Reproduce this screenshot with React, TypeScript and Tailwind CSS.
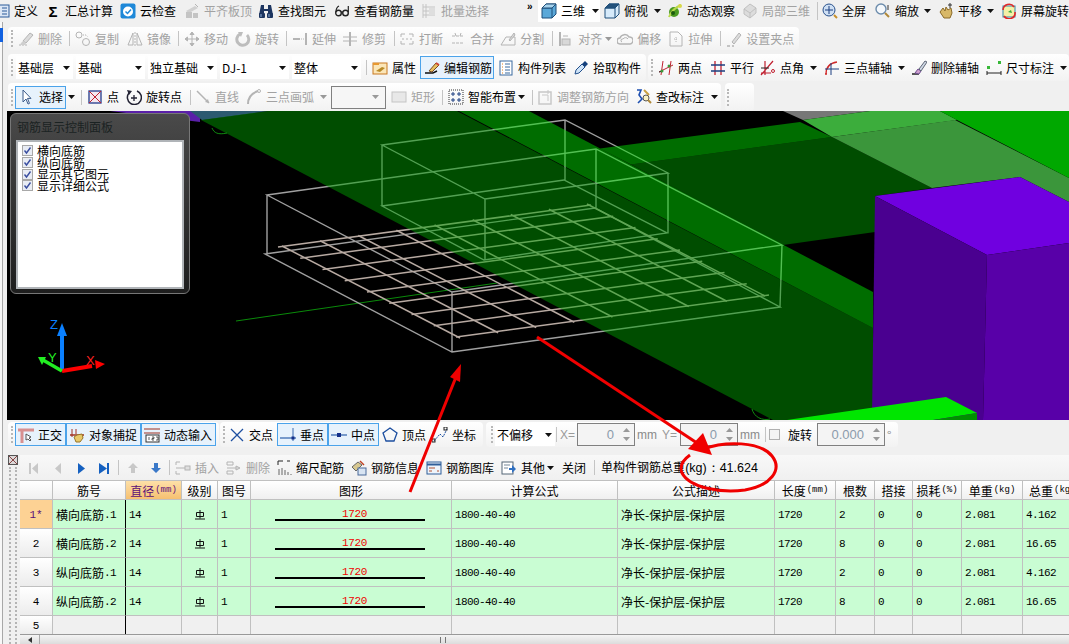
import { ReactNode } from "react";
import clsx from "clsx";

function Svg({ children }: { children: ReactNode }) {
  return (
    <svg viewBox="0 0 16 16" fill="none" className="w-4 h-4 shrink-0">
      {children}
    </svg>
  );
}

const GRAY = "#b4b4b4";

// top row
const DocIcon = () => <Svg><rect x="1" y="2" width="14" height="12" fill="#dbe6f5" stroke="#2a5a9a" /><path d="M8 5h5M8 8h5M8 11h5" stroke="#2a5a9a" /></Svg>;
const CloudIcon = () => <Svg><rect x="0.5" y="0.5" width="15" height="15" rx="2" fill="#1e88d8" /><circle cx="8" cy="8.5" r="5" fill="#fff" /><path d="M5.5 8.5l2 2 3.5-4" stroke="#1e88d8" strokeWidth="1.5" /></Svg>;
const PlateIcon = () => <Svg><path d="M2 8l9-5 3 2-9 5z" fill="#d0d0d0" /><path d="M2 9h6v6H2zM9 10h5v5H9z" fill="#c4c4c4" /><path d="M11 1l3 3" stroke={GRAY} /></Svg>;
const BinocIcon = () => <Svg><path d="M3 2h3v4h4V2h3l2 10h-5V8H6v4H1z" fill="#1d3560" /><rect x="1" y="10" width="6" height="5" rx="1" fill="#1d3560" /><rect x="9" y="10" width="6" height="5" rx="1" fill="#1d3560" /><path d="M3 11v3M11 11v3" stroke="#8fb0d8" /></Svg>;
const GlassesIcon = () => <Svg><circle cx="4.5" cy="10" r="2.8" stroke="#222" strokeWidth="1.4" /><circle cx="11.5" cy="10" r="2.8" stroke="#222" strokeWidth="1.4" /><path d="M7 9h2M2 9c0-3 1-5 3-6M14.3 9V3" stroke="#222" strokeWidth="1.2" /></Svg>;
const BatchIcon = () => <Svg><path d="M2 1v14M5 1v14M2 4h12M2 8h12M2 12h12" stroke="#c4c4c4" /><path d="M8 5h6v7H8z" fill="#dedede" /></Svg>;
const CubeIcon = ({ light }: { light?: boolean }) => <Svg><path d="M1 5l4-4h10v10l-4 4H1z" fill={light ? "#d6eafa" : "#5ba8d8"} stroke="#1f4f7a" /><path d="M1 5h10v10M11 5l4-4" stroke="#1f4f7a" /><path d="M1 5l4-4h10l-4 4z" fill={light ? "#24527c" : "#a8d4ee"} stroke="#1f4f7a" /></Svg>;
const OrbitIcon = () => <Svg><ellipse cx="7" cy="9" rx="5" ry="5" fill="#4a9a22" /><path d="M2 14C4 9 9 4 14 2" stroke="#b8d84a" strokeWidth="2" /><circle cx="13" cy="3" r="2" fill="#d8d84a" /><circle cx="6" cy="10" r="2" fill="#1d5a10" /></Svg>;
const LocalIcon = () => <Svg><path d="M2 6l6-5 6 4v5l-6 5-6-4z" fill="#dcdcdc" stroke="#c0c0c0" /><path d="M2 6l6 4 6-5M8 10v5" stroke="#c0c0c0" /></Svg>;
const FullIcon = () => <Svg><circle cx="7" cy="7" r="6" fill="#cfe0f4" stroke="#28508c" /><path d="M7 3v8M3 7h8" stroke="#1d3f80" /><path d="M12 12l3 3" stroke="#c8902a" strokeWidth="2" /></Svg>;
const ZoomIcon = () => <Svg><circle cx="6" cy="6" r="5" fill="#f4f8fc" stroke="#6c8cac" strokeWidth="1.4" /><path d="M10 10l4 4" stroke="#b08838" strokeWidth="2" /><path d="M13 2v5" stroke="#333" /></Svg>;
const HandIcon = () => <Svg><path d="M2 9l3-4 2 3 1-4 2 3 3-2 1 5-2 5H6z" fill="#d8b868" stroke="#8a6a28" /><path d="M12 0v5M10 2h4" stroke="#333" /></Svg>;
const ScreenIcon = () => <Svg><rect x="2" y="3" width="12" height="11" fill="#f4f0a8" stroke="#38a" /><path d="M2 7a6 6 0 0 1 11-3M14 9a6 6 0 0 1-11 4" stroke="#e02828" strokeWidth="1.6" /><path d="M7 9l3-2 1 3z" fill="#38a838" /></Svg>;

// edit row, all greyed out
const EraserIcon = () => <Svg><path d="M5 10l7-8 3 2-7 8z" fill="#dcdcdc" stroke={GRAY} /><path d="M1 14h9" stroke={GRAY} strokeDasharray="2 1" /><path d="M3 12l2-2 3 2-1 2H2z" fill="#cfcfcf" /></Svg>;
const CopyIcon = () => <Svg><circle cx="4" cy="4" r="3" stroke={GRAY} /><circle cx="11" cy="11" r="3.5" stroke={GRAY} /><path d="M8 4h3l2 2" stroke={GRAY} strokeDasharray="1 1" /></Svg>;
const MirrorIcon = () => <Svg><path d="M6 2L1 14h5zM10 2l5 12h-5z" stroke={GRAY} /><path d="M8 1v14" stroke={GRAY} strokeDasharray="2 1" /></Svg>;
const MoveIcon = () => <Svg><path d="M8 1v14M1 8h14M8 1L6 3.5h4zM8 15l-2-2.5h4zM1 8l2.5-2v4zM15 8l-2.5-2v4z" stroke={GRAY} fill={GRAY} /></Svg>;
const RotateIcon = () => <Svg><path d="M12 4a6 6 0 1 1-7-1" stroke="#bdbdbd" strokeWidth="3" /><path d="M3 1l5 0-2 5z" fill="#bdbdbd" /></Svg>;
const ExtendIcon = () => <Svg><path d="M1 8h7" stroke={GRAY} strokeWidth="2" /><path d="M9 8h3" stroke={GRAY} strokeDasharray="1 1" /><path d="M14 2v12" stroke={GRAY} strokeWidth="2" /></Svg>;
const TrimIcon = () => <Svg><path d="M1 6h6M1 10h6M9 6h6M9 10h6" stroke={GRAY} /><path d="M8 1v14" stroke={GRAY} strokeWidth="2" /></Svg>;
const BreakIcon = () => <Svg><path d="M2 3h4M10 3h4M2 13h4M10 13h4M2 3v3M14 3v3M2 13v-3M14 13v-3" stroke={GRAY} /><path d="M3 8h10" stroke={GRAY} strokeDasharray="2 2" /></Svg>;
const MergeIcon = () => <Svg><path d="M2 5h12M2 12h12" stroke={GRAY} strokeDasharray="3 1" /><path d="M5 2l1 3M11 2l-1 3" stroke={GRAY} /></Svg>;
const SplitIcon = () => <Svg><path d="M1 14l5-8h9v8z" stroke={GRAY} /><path d="M9 9l5-7 1 2-5 6z" fill="#d8d8d8" stroke={GRAY} /></Svg>;
const AlignIcon = () => <Svg><path d="M2 1v14" stroke={GRAY} strokeWidth="2" /><rect x="4" y="8" width="8" height="6" fill="#d8d8d8" stroke={GRAY} /><path d="M5 5h5" stroke={GRAY} /></Svg>;
const OffsetIcon = () => <Svg><path d="M3 13a3 3 0 0 1 0-6 5 5 0 0 1 9-1 3.5 3.5 0 0 1 1 7z" stroke={GRAY} strokeWidth="1.5" /><path d="M5 11a1 1 0 0 1 1-3 3 3 0 0 1 5 0" stroke={GRAY} /></Svg>;
const StretchIcon = () => <Svg><path d="M2 1h8l4 4v10H2z" stroke={GRAY} /><path d="M6 8h4M8 6v6" stroke={GRAY} strokeDasharray="1 1" /></Svg>;
const GripEditIcon = () => <Svg><path d="M1 15h3M6 15h2" stroke={GRAY} strokeWidth="1.5" /><path d="M6 11l7-9 2 2-7 9z" fill="#dcdcdc" stroke={GRAY} /></Svg>;

// selection row
const AttrIcon = () => <Svg><rect x="1" y="3" width="14" height="11" fill="#fbe6b8" stroke="#c87820" /><path d="M1 3h6v2H1z" fill="#e89830" /><path d="M4 11l6-4 3 1-5 4z" fill="#b88a28" /></Svg>;
const PenIcon = () => <Svg><path d="M1 13h8l4-2" stroke="#111" strokeWidth="1.4" /><path d="M5 11l7-8 3 2-7 7z" fill="#e8c060" stroke="#7a4a20" /><path d="M12 3l3 2" stroke="#d04a3a" strokeWidth="2" /></Svg>;
const ListIcon = () => <Svg><rect x="2" y="1" width="12" height="14" fill="#fff" stroke="#3a6aa0" /><path d="M4 4h1M4 7h1M4 10h1M4 13h1" stroke="#e08020" /><path d="M7 4h5M7 7h5M7 10h5M7 13h5" stroke="#3a6aa0" /></Svg>;
const DropperIcon = () => <Svg><path d="M2 14l1-4 6-6 3 3-6 6z" fill="#cfe4f8" stroke="#23508c" /><path d="M9 4l3-3 3 3-3 3z" fill="#14407c" /></Svg>;
const TwoPointIcon = () => <Svg><path d="M1 12L15 5M5 1L3 15M13 1l-2 14" stroke="#c02030" /><path d="M1 12l4-1" stroke="#222" /><circle cx="4" cy="11" r="1.5" fill="#3a9a3a" /><circle cx="11" cy="6" r="1.5" fill="#3a9a3a" /></Svg>;
const ParallelIcon = () => <Svg><path d="M5 1v14M11 1v14" stroke="#c02030" strokeWidth="1.3" /><path d="M1 5h14M1 11h14" stroke="#1d3f80" strokeWidth="1.3" /></Svg>;
const AngleIcon = () => <Svg><path d="M1 13h10M5 1v14M1 15L13 1" stroke="#c02030" strokeWidth="1.2" /><path d="M1 8h8" stroke="#222" /><circle cx="13" cy="11" r="1.5" stroke="#c02030" /></Svg>;
const ArcIcon = () => <Svg><path d="M2 14C2 7 6 3 13 2" stroke="#d02828" strokeWidth="1.3" /><path d="M7 3v12M1 9h14" stroke="#1d3f80" /><circle cx="2" cy="14" r="1" fill="#d02828" /></Svg>;
const BrushIcon = () => <Svg><path d="M1 14h7" stroke="#222" strokeWidth="1.5" /><path d="M4 13l3-4 3 2-2 3z" fill="#d0a0d0" stroke="#705090" /><path d="M8 9l6-8 2 1-6 9z" fill="#cfd8e4" stroke="#606878" /></Svg>;
const DimIcon = () => <Svg><path d="M1 13h14M1 11v4M15 11v4" stroke="#222" /><rect x="1" y="6" width="3" height="3" fill="#38b838" /><rect x="12" y="1" width="3" height="3" fill="#38b838" /></Svg>;

const CursorIcon = () => <Svg><path d="M4 1v12l3-3 2 5 1.5-.6-2-5H12z" fill="#fff" stroke="#3a5a8a" /></Svg>;
const PointIcon = () => <Svg><rect x="2" y="2" width="12" height="12" fill="#f4e8f0" stroke="#223a8a" strokeWidth="1.3" /><path d="M2 2l12 12M14 2L2 14" stroke="#c02030" /></Svg>;
const RotPointIcon = () => <Svg><path d="M11 2a7 7 0 1 1-8 2" stroke="#223" strokeWidth="1.5" /><path d="M1 1l5 1-3 4z" fill="#223" /><path d="M8 6v6M5 9h6" stroke="#223" strokeWidth="1.3" /></Svg>;
const LineIcon = () => <Svg><path d="M2 2l12 12" stroke={GRAY} strokeWidth="1.5" /><path d="M14 14l-4-1 3-3z" fill={GRAY} /></Svg>;
const GrayArcIcon = () => <Svg><path d="M2 15C2 8 6 4 12 2" stroke={GRAY} strokeWidth="2" /><circle cx="13" cy="2" r="1.5" stroke={GRAY} /></Svg>;
const RectIcon = () => <Svg><rect x="1" y="3" width="14" height="10" fill="#e8e8e8" stroke="#c4c4c4" /></Svg>;
const SmartIcon = () => <Svg><rect x="1" y="1" width="14" height="14" stroke="#333" strokeDasharray="1 1" /><path d="M5 3v4M3 5h4M11 3v4M9 5h4M5 9v4M3 11h4M11 9v4M9 11h4" stroke="#1d3f80" /></Svg>;
const AdjustIcon = () => <Svg><rect x="2" y="3" width="12" height="12" stroke="#c8c8c8" strokeWidth="1.5" /><path d="M5 6h6v6M11 1v4" stroke="#c8c8c8" /></Svg>;
const MarkIcon = () => <Svg><path d="M1 1h4L3 6l3 4-4 4" stroke="#1d4fb0" strokeWidth="1.6" /><circle cx="10" cy="9" r="3" fill="#f8f0c0" stroke="#555" /><path d="M12 11l3 3" stroke="#b08838" strokeWidth="2" /><path d="M8 1l5 5" stroke="#c8a040" strokeWidth="2" /></Svg>;

// snap row
const OrthoIcon = () => <Svg><path d="M0 3h16" stroke="#d89090" strokeWidth="3" /><path d="M4 3v13" stroke="#d89090" strokeWidth="3" /><path d="M8 7v6l2-1 2 2 1-1-2-2 2-1z" fill="#fff" stroke="#555" /></Svg>;
const CaptureIcon = () => <Svg><path d="M1 8h14" stroke="#a03020" strokeWidth="1.5" /><path d="M3 2v8M7 2v5" stroke="#a03020" /><path d="M5 10l3-2 5-1 1 4-3 4H7z" fill="#e8c868" stroke="#98762a" /></Svg>;
const InputIcon = () => <Svg><path d="M0 2h16M0 6h16" stroke="#a03020" strokeWidth="1.2" /><rect x="2" y="8" width="13" height="7" fill="#fff" stroke="#333" /><path d="M5 10v3M8 10h2v1.5H8V13h2M12 10h2v3h-2" stroke="#333" strokeWidth=".8" /></Svg>;
const CrossIcon = () => <Svg><path d="M2 2l12 12M14 2L2 14" stroke="#1d4fa0" strokeWidth="1.3" /></Svg>;
const PerpIcon = () => <Svg><path d="M0 11h16" stroke="#3a6ab0" strokeWidth="1.3" /><path d="M13 1v13" stroke="#3a6ab0" /><rect x="11.5" y="9.5" width="3" height="3" fill="#14308a" /></Svg>;
const MidIcon = () => <Svg><path d="M0 8h16" stroke="#3a6ab0" strokeWidth="1.3" /><rect x="6" y="6" width="4" height="4" fill="#14308a" /></Svg>;
const PentIcon = () => <Svg><path d="M8 1l7 5-3 8H4L1 6z" stroke="#1d4fa0" strokeWidth="1.3" /></Svg>;
const CoordIcon = () => <Svg><path d="M2 14L8 7l3 3 4-8" stroke="#1d4fa0" strokeDasharray="2 1" /><rect x="0" y="12" width="3" height="3" stroke="#222" /><rect x="12" y="0" width="3" height="3" stroke="#222" /></Svg>;

// table toolbar
const First = () => <Svg><rect x="3" y="3" width="2" height="11" fill="#c8c8c8" /><path d="M12 3v11L6 8.5z" fill="#c8c8c8" /></Svg>;
const Prev = () => <Svg><path d="M11 3v11L5 8.5z" fill="#c8c8c8" /></Svg>;
const Next = () => <Svg><path d="M5 3v11l7-5.5z" fill="#1560c0" /></Svg>;
const Last = () => <Svg><path d="M3 3v11l8-5.5z" fill="#1560c0" /><rect x="11" y="3" width="2" height="11" fill="#1560c0" /></Svg>;
const Up = () => <Svg><path d="M8 3l5 5h-3v5H6V8H3z" fill="#c8c8c8" /></Svg>;
const Down = () => <Svg><path d="M8 13l5-5h-3V3H6v5H3z" fill="#3a78c8" /></Svg>;
const InsertIcon = () => <Svg><path d="M1 2h4M1 14h4M1 2v3M1 14v-3M1 8h9" stroke={GRAY} /><rect x="10" y="6" width="5" height="4" fill="#e0e0e0" stroke={GRAY} /></Svg>;
const DelRowIcon = () => <Svg><path d="M1 2h6v3H1zM1 11h6v3H1zM1 8h9" stroke={GRAY} /><path d="M10 6l4 2-4 2z" fill="#d8d8d8" stroke={GRAY} /></Svg>;
const ScaleIcon = () => <Svg><path d="M2 1h5M2 1v4M14 1h-3" stroke="#222" /><path d="M3 15V9M6 15V8M9 15v-5M12 15v-3M15 15v-1" stroke="#666" /></Svg>;
const InfoIcon = () => <Svg><path d="M1 7l6-5 4 3-6 6z" fill="#d8c890" stroke="#666" /><rect x="7" y="8" width="8" height="7" fill="#d8e4f2" stroke="#4a6a9a" /><path d="M9 1l4 4" stroke="#c04020" strokeWidth="1.5" /></Svg>;
const LibIcon = () => <Svg><rect x="1" y="2" width="14" height="12" fill="#eef4fb" stroke="#2f5f9a" /><path d="M1 4.500h14" stroke="#2f5f9a" strokeWidth="2" /><path d="M3 8h6M3 11h3M11 11h2" stroke="#b05030" /></Svg>;
const OtherIcon = () => <Svg><rect x="1" y="2" width="11" height="12" fill="#fff" stroke="#567" /><path d="M3 5h6M3 8h4" stroke="#789" /><path d="M8 8h3V5l4 4-4 4v-3H8z" fill="#2f6fc0" /></Svg>;

function Tool({ icon, label, muted, className }: { icon: ReactNode; label: ReactNode; muted?: boolean; className?: string }) {
  return (
    <div className={clsx("flex items-center gap-1 shrink-0 whitespace-nowrap", muted && "text-[#a2a2a2]", className)}>
      {icon}
      <span>{label}</span>
    </div>
  );
}

function Caret({ className, muted }: { className?: string; muted?: boolean }) {
  return (
    <svg viewBox="0 0 7 4" className={clsx("w-[7px] h-1 shrink-0", className)}>
      <path d="M0 0h7L3.500 4z" fill={muted ? "#999" : "#111"} />
    </svg>
  );
}

function Sep({ className }: { className?: string }) {
  return <div className={clsx("w-px h-[15px] bg-[#c4c4c4] shrink-0", className)} />;
}

function Grip({ className }: { className?: string }) {
  return <div className={clsx("w-0.5 h-[17px] border-l-2 border-dotted border-[#b8b8b8] shrink-0", className)} />;
}

function Band({ className, children }: { className?: string; children: ReactNode }) {
  return <div className={clsx("flex items-center bg-gradient-to-b from-white to-[#f2f2f2] rounded-sm shrink-0", className)}>{children}</div>;
}

function Drop({ label, className }: { label: string; className: string }) {
  return (
    <div className={clsx("flex items-center justify-between h-[23px] bg-white pl-0.5 pr-[3px] shrink-0", className)}>
      <span>{label}</span>
      <Caret />
    </div>
  );
}

function Spin({ value, className }: { value: string; className: string }) {
  return (
    <div className={clsx("flex items-center h-[23px] border border-[#808080] bg-[#f4f4f4] shrink-0", className)}>
      <span className="flex-1 text-right pr-[9px] text-[#8b9bab] text-[13px] font-['Liberation_Sans',sans-serif]">{value}</span>
      <div className="flex flex-col gap-[5px] pr-1">
        <Caret muted className="rotate-180" />
        <Caret muted />
      </div>
    </div>
  );
}

const BUTTON = "flex items-center gap-1 h-[23px] border border-[#4ba3ea] bg-[#e7f2fc] shrink-0";

function Scene() {
  const p0 = [282, 247];
  const p1 = [460, 337];
  const p2 = [765, 295];
  const p3 = [587, 205];
  const mix = (a: number[], b: number[], t: number) => [a[0] + (b[0] - a[0]) * t, a[1] + (b[1] - a[1]) * t];
  const steps = [0, 1, 2, 3, 4, 5, 6, 7, 8].map((i) => i / 8);
  const box = "#a0a0a0";
  return (
    <svg viewBox="7 111 1062 309" className="block w-[1062px] h-[309px] bg-black">
      <path d="M110 111h90v11z" fill="#5a20a8" />
      <path d="M190 111h78l-66 9z" fill="#2c5a70" />
      <path d="M236 321L497 283" stroke="#0a8a0a" />
      <path d="M212 128c2 5 6 7 15 5" stroke="#108a10" />
      <path d="M752 409c2 8 10 12 18 10" stroke="#108a10" />
      <g stroke={box} strokeWidth="1.4" fill="none">
        <path d="M267 195L596 149L782 245L452 292ZM265 254L595 208L780 307L452 352ZM267 195V254M452 292V352M782 245L780 307M596 149V208" />
        <path d="M382 145L565 120L668 173L485 199ZM382 206L564 180L667 233L484 260ZM382 145V206M485 199V260M565 120V180M668 173V233" />
      </g>
      <g stroke="#b8aaa2" strokeWidth="1.5">
        {steps.map((t) => {
          const a = mix(p0, p1, t);
          const b = mix(p3, p2, t);
          return <line key={"a" + t} x1={a[0] - 4} y1={a[1]} x2={b[0] + 4} y2={b[1]} />;
        })}
        {steps.map((t) => {
          const a = mix(p0, p3, t);
          const b = mix(p1, p2, t);
          return <line key={"b" + t} x1={a[0]} y1={a[1] - 1} x2={b[0]} y2={b[1] + 1} />;
        })}
      </g>
      <path d="M268 111L457 111L873 328V420H773L201 120Z" fill="#00a000" fillOpacity=".48" />
      <path d="M457 110L527 110L873 292V328Z" fill="#00e300" fillOpacity=".48" />
      <path d="M600 148.600L800 122L832 137L631 164.500Z" fill="#00e300" fillOpacity=".48" />
      <path d="M631 164.500L832 137L932 188L875 196V232L783 245Z" fill="#00a000" fillOpacity=".48" />
      <path d="M783 111H870L803 120Z" fill="#777" />
      <path d="M803 120L870 111H940L957 120L832 137Z" fill="#3cad3c" />
      <path d="M832 137L955 120L1069 178V202L1020 177L932 188Z" fill="#3b963b" />
      <path d="M940 111H1069V178L957 120Z" fill="#00a800" />
      <path d="M875 196L1020 177L1069 202V243L987 255Z" fill="#7000e0" />
      <path d="M875 196L987 255L983 420H872Z" fill="#4a0090" />
      <path d="M987 255L1069 243V420H983Z" fill="#5800a8" />
      <path d="M787 420L946 397L977 413L933 420Z" fill="#00e600" />
      <path d="M933 420L977 413V420Z" fill="#009000" />
      <path d="M62 371V335" stroke="#0a80ff" strokeWidth="4" />
      <path d="M62 323L57 336H67Z" fill="#0a80ff" />
      <path d="M62 371L92 366" stroke="#ff0000" strokeWidth="4" />
      <path d="M105 364L95 360L96 369Z" fill="#ff0000" />
      <path d="M62 371L43 360" stroke="#22ee22" strokeWidth="3.500" />
      <path d="M38 357L46 357L42 365Z" fill="#22ee22" />
      <g fontFamily="'Liberation Sans',sans-serif" fontSize="13">
        <text x="50" y="329" fill="#0a80ff">Z</text>
        <text x="86" y="365" fill="#ff2020">X</text>
        <text x="48" y="362" fill="#22ee22">Y</text>
      </g>
    </svg>
  );
}

function HeadCell({ children, active, className }: { children?: ReactNode; active?: boolean; className?: string }) {
  return (
    <div className={clsx("flex items-center justify-center pt-px border-r border-b border-[#c0c0c0] bg-gradient-to-b", active ? "from-[#fde0a8] to-[#f6c070] text-[#5a1078]" : "from-white to-[#f0f0f0]", className)}>
      {children}
    </div>
  );
}

const Unit = ({ children }: { children: string }) => <span className="font-['Liberation_Mono',monospace] text-[9px] ml-px">{children}</span>;

const rows = [
  { no: "1*", name: "横向底筋", sfx: ".1", count: "2", total: "4.162" },
  { no: "2", name: "横向底筋", sfx: ".2", count: "8", total: "16.65" },
  { no: "3", name: "纵向底筋", sfx: ".1", count: "2", total: "4.162" },
  { no: "4", name: "纵向底筋", sfx: ".2", count: "8", total: "16.65" },
];

const CELL = "flex items-center pt-0.5 border-r border-b border-[#c0c0c0] bg-[#c9fdd3] pl-[3px] min-w-0";
const MONO = "font-['Liberation_Mono',monospace] text-[11px] tracking-[-0.6px]";

function GradeMark() {
  return (
    <svg viewBox="0 0 12 12" className="w-3 h-3 -ml-0.5">
      <path d="M2.500 3.500h7v4h-7zM6 1v8.500M1 10h10" stroke="#111" fill="none" />
    </svg>
  );
}

function RebarTable() {
  return (
    <div className="grid grid-cols-[33px_73px_56px_36px_33px_201px_166px_157px_61px_39px_38px_49px_61px_60px] grid-rows-[19px_29px_29px_29px_29px_18px] border-t border-[#c0c0c0] w-[1049px] overflow-hidden">
      <HeadCell />
      <HeadCell>筋号</HeadCell>
      <HeadCell active>直径<Unit>(mm)</Unit></HeadCell>
      <HeadCell>级别</HeadCell>
      <HeadCell>图号</HeadCell>
      <HeadCell>图形</HeadCell>
      <HeadCell>计算公式</HeadCell>
      <HeadCell>公式描述</HeadCell>
      <HeadCell>长度<Unit>(mm)</Unit></HeadCell>
      <HeadCell>根数</HeadCell>
      <HeadCell>搭接</HeadCell>
      <HeadCell className="whitespace-nowrap">损耗<Unit>(%)</Unit></HeadCell>
      <HeadCell className="whitespace-nowrap">单重<Unit>(kg)</Unit></HeadCell>
      <HeadCell className="whitespace-nowrap justify-start pl-1.5">总重<Unit>(kg)</Unit></HeadCell>

      {rows.map((r, i) => (
        <div key={r.no} className="contents">
          <div className={clsx("flex items-center justify-center pt-0.5 border-r border-b border-[#c0c0c0] font-['Liberation_Mono',monospace] text-[11px]", i === 0 ? "bg-[#fdd294] text-[#5a1078]" : "bg-gradient-to-b from-white to-[#ececec]")}>{r.no}</div>
          <div className={clsx(CELL, "border-r-black")}>{r.name}<span className={MONO}>{r.sfx}</span></div>
          <div className={clsx(CELL, MONO, i === 0 && "bg-[#b2f0dc]")}>14</div>
          <div className={clsx(CELL, "justify-center pl-0")}><GradeMark /></div>
          <div className={clsx(CELL, MONO)}>1</div>
          <div className={clsx(CELL, "flex-col justify-center pl-0 pr-1.5")}>
            <span className="ml-2.5 font-['Liberation_Mono',monospace] text-[11px] leading-[10px] text-[#f00000] tracking-[-0.4px]">1720</span>
            <div className="w-[150px] h-0.5 bg-black" />
          </div>
          <div className={clsx(CELL, MONO)}>1800-40-40</div>
          <div className={CELL}>净长-保护层-保护层</div>
          <div className={clsx(CELL, MONO)}>1720</div>
          <div className={clsx(CELL, MONO)}>{r.count}</div>
          <div className={clsx(CELL, MONO)}>0</div>
          <div className={clsx(CELL, MONO)}>0</div>
          <div className={clsx(CELL, MONO)}>2.081</div>
          <div className={clsx(CELL, MONO)}>{r.total}</div>
        </div>
      ))}

      <div className="flex items-center justify-center pt-0.5 border-r border-[#c0c0c0] bg-gradient-to-b from-white to-[#ececec] font-['Liberation_Mono',monospace] text-[11px]">5</div>
      <div className="border-r border-black" />
      {[2, 3, 4, 5, 6, 7, 8, 9, 10, 11, 12, 13].map((c) => (
        <div key={c} className="border-r border-[#c0c0c0]" />
      ))}
    </div>
  );
}

export default function App() {
  return (
    <div className="relative w-[1069px] h-[644px] overflow-hidden bg-[#f0f0f0] text-[12px] leading-none text-black font-['Noto_Sans_CJK_SC','Liberation_Sans',sans-serif]">
      {/* top menu row */}
      <div className="flex items-center h-[22px]">
        <Tool icon={<DocIcon />} label="定义" className="ml-[-6px]" />
        <div className="flex items-center gap-1 ml-[7px] shrink-0">
          <span className="w-4 text-center text-[15px] font-bold font-['Liberation_Sans',sans-serif]">Σ</span>
          <span>汇总计算</span>
        </div>
        <Tool icon={<CloudIcon />} label="云检查" className="ml-[7px]" />
        <Tool icon={<PlateIcon />} label="平齐板顶" muted className="ml-2" />
        <Tool icon={<BinocIcon />} label="查找图元" className="ml-1.5" />
        <Tool icon={<GlassesIcon />} label="查看钢筋量" className="ml-2" />
        <Tool icon={<BatchIcon />} label="批量选择" muted className="ml-[7px]" />
        <span className="ml-[38px] w-[14px] -mt-2 text-[10px] font-bold font-['Liberation_Sans',sans-serif]">»</span>
        <div className="flex items-center w-[62px] h-[22px] bg-white pl-[3px] shrink-0">
          <Tool icon={<CubeIcon />} label="三维" />
          <Caret className="ml-[7px]" />
        </div>
        <Tool icon={<CubeIcon light />} label="俯视" className="ml-1" />
        <Caret className="ml-1.5" />
        <Tool icon={<OrbitIcon />} label="动态观察" className="ml-1.5" />
        <Tool icon={<LocalIcon />} label="局部三维" muted className="ml-[7px]" />
        <Sep className="ml-[7px] h-[18px]" />
        <Tool icon={<FullIcon />} label="全屏" className="ml-1" />
        <Tool icon={<ZoomIcon />} label="缩放" className="ml-[9px]" />
        <Caret className="ml-[5px]" />
        <Tool icon={<HandIcon />} label="平移" className="ml-[7px]" />
        <Caret className="ml-[5px]" />
        <Tool icon={<ScreenIcon />} label="屏幕旋转" className="ml-[7px]" />
      </div>

      <div className="flex h-[622px]">
        {/* left dock edge */}
        <div className="relative w-[7px] shrink-0 border-l-[2px] border-l-[#f8f8f8]">
          <div className="w-px h-full bg-[#a8a8a8]" />
          <div className="absolute left-[-2px] top-[6px] w-[3px] h-[14px] bg-[#1060e0]" />
        </div>

        <div className="flex flex-col w-[1062px]">
          {/* modify row */}
          <Band className="ml-px mt-[5px] h-[23px] w-[791px]">
            <Grip className="ml-[3px]" />
            <Tool muted icon={<EraserIcon />} label="删除" className="ml-[5px]" />
            <Sep className="ml-[7px]" />
            <Tool muted icon={<CopyIcon />} label="复制" className="ml-[5px]" />
            <Tool muted icon={<MirrorIcon />} label="镜像" className="ml-2" />
            <Sep className="ml-[7px]" />
            <Tool muted icon={<MoveIcon />} label="移动" className="ml-[5px]" />
            <Tool muted icon={<RotateIcon />} label="旋转" className="ml-[7px]" />
            <Sep className="ml-[7px]" />
            <Tool muted icon={<ExtendIcon />} label="延伸" className="ml-[5px]" />
            <Tool muted icon={<TrimIcon />} label="修剪" className="ml-1.5" />
            <Sep className="ml-2" />
            <Tool muted icon={<BreakIcon />} label="打断" className="ml-1" />
            <Tool muted icon={<MergeIcon />} label="合并" className="ml-[7px]" />
            <Tool muted icon={<SplitIcon />} label="分割" className="ml-1.5" />
            <Sep className="ml-2" />
            <Tool muted icon={<AlignIcon />} label="对齐" className="ml-[5px]" />
            <Caret muted className="ml-[3px]" />
            <Tool muted icon={<OffsetIcon />} label="偏移" className="ml-[5px]" />
            <Tool muted icon={<StretchIcon />} label="拉伸" className="ml-[7px]" />
            <Sep className="ml-2" />
            <Tool muted icon={<GripEditIcon />} label="设置夹点" className="ml-[5px]" />
          </Band>

          {/* component row */}
          <div className="flex ml-px mt-1 h-[27px]">
            <Band className="w-[638px]">
              <Grip className="ml-[3px]" />
              <Drop label="基础层" className="ml-[3px] w-[57px]" />
              <Drop label="基础" className="ml-[3px] w-[69px]" />
              <Drop label="独立基础" className="ml-[3px] w-[69px]" />
              <Drop label="DJ-1" className="ml-[3px] w-[69px]" />
              <Drop label="整体" className="ml-[3px] w-[69px]" />
              <Sep className="ml-[5px]" />
              <Tool icon={<AttrIcon />} label="属性" className="ml-[5px]" />
              <div className={clsx(BUTTON, "ml-1 w-[74px] pl-[3px]")}>
                <PenIcon />
                <span>编辑钢筋</span>
              </div>
              <Tool icon={<ListIcon />} label="构件列表" className="ml-1" />
              <Tool icon={<DropperIcon />} label="拾取构件" className="ml-[7px]" />
            </Band>
            <Band className="ml-0.5 w-[421px]">
              <Grip className="ml-[3px]" />
              <Tool icon={<TwoPointIcon />} label="两点" className="ml-[5px]" />
              <Tool icon={<ParallelIcon />} label="平行" className="ml-2" />
              <Tool icon={<AngleIcon />} label="点角" className="ml-1.5" />
              <Caret className="ml-1.5" />
              <Tool icon={<ArcIcon />} label="三点辅轴" className="ml-[7px]" />
              <Caret className="ml-1.5" />
              <Tool icon={<BrushIcon />} label="删除辅轴" className="ml-1.5" />
              <Tool icon={<DimIcon />} label="尺寸标注" className="ml-[7px]" />
              <Caret className="ml-1.5" />
            </Band>
          </div>

          {/* draw row */}
          <div className="flex ml-px mt-0.5 h-[28px]">
            <Band className="w-[713px]">
              <Grip className="ml-[3px]" />
              <div className={clsx(BUTTON, "ml-0.5 w-[51px] pl-[3px]")}>
                <CursorIcon />
                <span>选择</span>
              </div>
              <Caret className="ml-0.5" />
              <Sep className="ml-1.5" />
              <Tool icon={<PointIcon />} label="点" className="ml-[5px]" />
              <Tool icon={<RotPointIcon />} label="旋转点" className="ml-[7px]" />
              <Sep className="ml-2" />
              <Tool muted icon={<LineIcon />} label="直线" className="ml-1" />
              <Tool muted icon={<GrayArcIcon />} label="三点画弧" className="ml-[7px]" />
              <Caret muted className="ml-1.5" />
              <div className="flex items-center justify-end w-[55px] h-[23px] ml-1 pr-1.5 border border-[#808080] bg-[#f6f6f6] shrink-0">
                <Caret muted />
              </div>
              <Tool muted icon={<RectIcon />} label="矩形" className="ml-[5px]" />
              <Sep className="ml-[7px]" />
              <Tool icon={<SmartIcon />} label="智能布置" className="ml-[5px]" />
              <Caret className="ml-0.5" />
              <Sep className="ml-[7px]" />
              <Tool muted icon={<AdjustIcon />} label="调整钢筋方向" className="ml-1" />
              <Tool icon={<MarkIcon />} label="查改标注" className="ml-[7px]" />
              <Caret className="ml-[7px]" />
            </Band>
            <Band className="ml-1 w-[29px]">
              <Grip className="ml-0.5" />
            </Band>
          </div>

          {/* 3d viewport */}
          <div className="relative h-[309px] shrink-0">
            <Scene />
            <div className="absolute left-[3px] top-[2px] w-[180px] h-[181px] rounded-md border border-[#777] bg-gradient-to-b from-[#4a4a4a] to-[#1e1e1e] px-[5px] pt-[5px]">
              <div className="h-[21px] pl-px pt-0.5 text-[#1a2222]">钢筋显示控制面板</div>
              <div className="h-[149px] border-[2px] border-double border-[#b0b4b8] bg-white pt-[3px] pl-1 text-[12px]">
                {["横向底筋", "纵向底筋", "显示其它图元", "显示详细公式"].map((t) => (
                  <div key={t} className="flex items-center gap-1 h-[11.700px] text-black">
                    <span className="flex items-center justify-center w-[11px] h-[11px] border border-[#a8a8a8] bg-[#e8ecf4] shrink-0">
                      <svg viewBox="0 0 9 9" className="w-[9px] h-[9px]">
                        <path d="M1.500 4.500L3.500 7L7.500 1.500" stroke="#3a4ea0" strokeWidth="1.400" fill="none" />
                      </svg>
                    </span>
                    <span>{t}</span>
                  </div>
                ))}
              </div>
            </div>
          </div>

          {/* snap row */}
          <div className="flex ml-px mt-0.5 h-[25px]">
            <Band className="w-[211px]">
              <Grip className="ml-[3px]" />
              <div className={clsx(BUTTON, "ml-0.5 w-[51px] pl-0.5 h-6")}>
                <OrthoIcon />
                <span>正交</span>
              </div>
              <div className={clsx(BUTTON, "w-[75px] pl-0.5 h-6")}>
                <CaptureIcon />
                <span>对象捕捉</span>
              </div>
              <div className={clsx(BUTTON, "w-[75px] pl-0.5 h-6")}>
                <InputIcon />
                <span>动态输入</span>
              </div>
            </Band>
            <Band className="ml-[1px] w-[263px]">
              <Grip className="ml-[3px]" />
              <Tool icon={<CrossIcon />} label="交点" className="ml-1" />
              <div className={clsx(BUTTON, "ml-1 w-[51px] pl-0.5 h-6")}>
                <PerpIcon />
                <span>垂点</span>
              </div>
              <div className={clsx(BUTTON, "w-[51px] pl-0.5 h-6")}>
                <MidIcon />
                <span>中点</span>
              </div>
              <Tool icon={<PentIcon />} label="顶点" className="ml-[3px]" />
              <Tool icon={<CoordIcon />} label="坐标" className="ml-1.5" />
            </Band>
            <Band className="ml-[3px] w-[412px]">
              <Grip className="ml-[5px]" />
              <Drop label="不偏移" className="ml-0.5 w-[60px] pl-0.5" />
              <Sep className="ml-px" />
              <span className="ml-[3px] text-[#9a9a9a] font-['Liberation_Sans',sans-serif] w-4">X=</span>
              <Spin value="0" className="ml-px w-[58px]" />
              <span className="ml-0.5 text-[#8a8a8a] font-['Liberation_Sans',sans-serif] text-[12px]">mm</span>
              <span className="ml-[5px] text-[#9a9a9a] font-['Liberation_Sans',sans-serif] w-4">Y=</span>
              <Spin value="0" className="ml-0.5 w-[58px]" />
              <span className="ml-0.5 text-[#8a8a8a] font-['Liberation_Sans',sans-serif] text-[12px]">mm</span>
              <Sep className="ml-[5px]" />
              <span className="ml-[3px] w-[11px] h-[11px] border border-[#b0b0b0] bg-[#f4f4f4] shrink-0" />
              <span className="ml-2 shrink-0">旋转</span>
              <Spin value="0.000" className="ml-[5px] w-[68px]" />
              <span className="ml-0.5 text-[#8a8a8a]">°</span>
            </Band>
          </div>

          {/* rebar editor */}
          <div className="flex mt-2 flex-1 min-h-0">
            <div className="relative w-[13px] shrink-0">
              <div className="ml-0.5 mt-[12px] w-2 h-full border-x-2 border-dotted border-[#b4b4b4]" />
              <div className="absolute left-px top-0 w-[10px] h-[10px] border border-[#555] bg-[#dcd8d8]">
                <svg viewBox="0 0 8 8" className="w-2 h-2">
                  <path d="M0 0l8 8M8 0L0 8" stroke="#884444" />
                </svg>
              </div>
            </div>
            <div className="flex flex-col w-[1049px] min-w-0">
              <div className="flex items-center h-[25px] shrink-0 bg-gradient-to-b from-[#f8f8f8] to-[#f0f0f0]">
                <div className="ml-1.5 flex items-center"><First /></div>
                <div className="ml-2 flex items-center"><Prev /></div>
                <div className="ml-[7px] flex items-center"><Next /></div>
                <div className="ml-[7px] flex items-center"><Last /></div>
                <Sep className="ml-1.5" />
                <div className="ml-1.5"><Up /></div>
                <div className="ml-[7px]"><Down /></div>
                <Sep className="ml-[5px]" />
                <Tool muted icon={<InsertIcon />} label="插入" className="ml-[5px]" />
                <Tool muted icon={<DelRowIcon />} label="删除" className="ml-[7px]" />
                <Tool icon={<ScaleIcon />} label="缩尺配筋" className="ml-1.5" />
                <Tool icon={<InfoIcon />} label="钢筋信息" className="ml-[7px]" />
                <Tool icon={<LibIcon />} label="钢筋图库" className="ml-[7px]" />
                <Tool icon={<OtherIcon />} label="其他" className="ml-[7px]" />
                <Caret className="ml-0.5" />
                <span className="ml-2 shrink-0">关闭</span>
                <Sep className="ml-2" />
                <span className="ml-1.5 whitespace-nowrap">
                  单构件钢筋总重<span className="font-['Liberation_Sans',sans-serif] text-[12.500px]">(kg)：41.624</span>
                </span>
              </div>
              <RebarTable />
              <div className="flex items-center h-[10px] shrink-0 border-t border-[#999] bg-gradient-to-b from-[#f4f4f4] to-[#dcdcdc]">
                <span className="w-5 shrink-0 border-r border-[#aaa] h-full flex items-center justify-center">
                  <svg viewBox="0 0 4 6" className="w-1 h-1.5"><path d="M4 0v6L0 3z" fill="#333" /></svg>
                </span>
                <div className="ml-[400px] w-[6px] h-[6px] border-x border-[#777]" />
              </div>
            </div>
          </div>
        </div>
      </div>

      {/* hand drawn red annotations on top of the screenshot */}
      <svg viewBox="0 0 1069 644" className="absolute inset-0 w-[1069px] h-[644px] pointer-events-none" fill="none">
        <path d="M410 492L456 377" stroke="#f00000" strokeWidth="3" />
        <path d="M461 364L450 377L460 382Z" fill="#f00000" />
        <path d="M537 337L697 443" stroke="#f00000" strokeWidth="3" />
        <path d="M712 455L688 449L703 433Z" fill="#f00000" />
        <path d="M703 449C725 441 760 441 772 456C783 470 770 486 745 490C720 493 690 488 682 473C679 466 683 460 690 455" stroke="#f00000" strokeWidth="3" />
      </svg>
    </div>
  );
}
